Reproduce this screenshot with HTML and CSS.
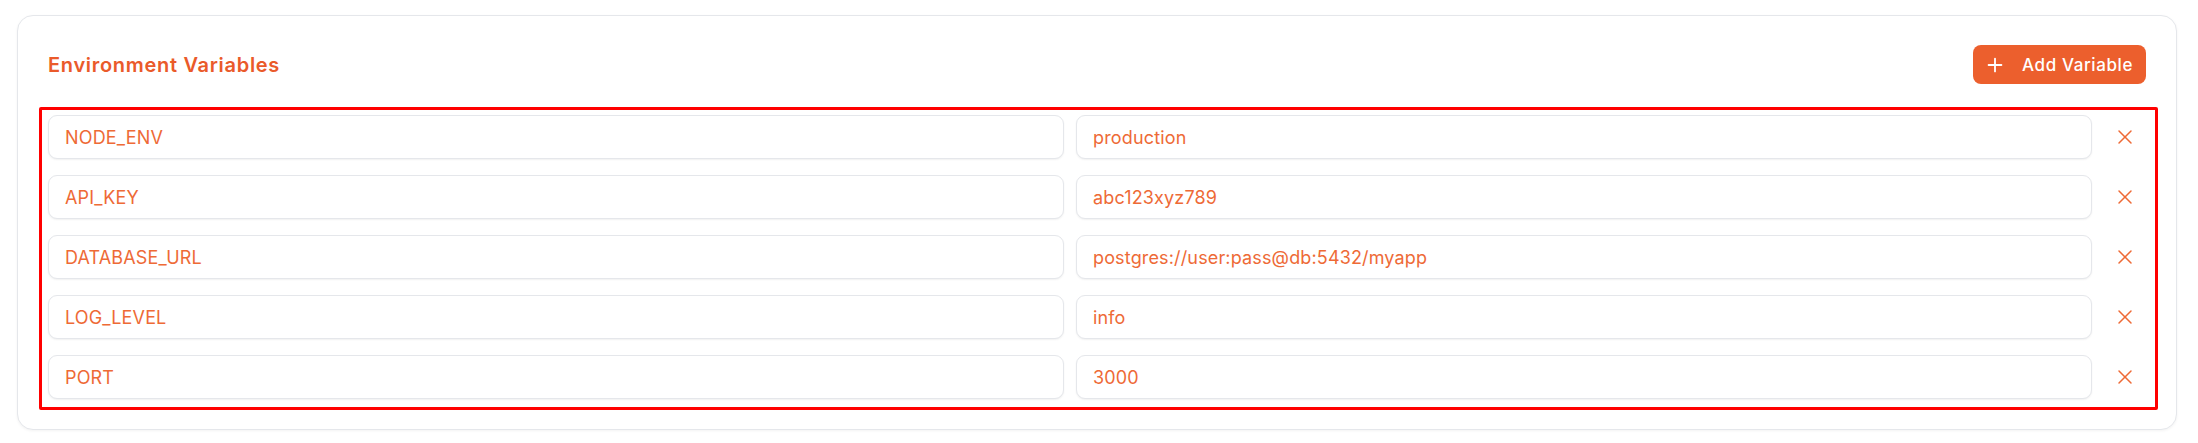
FILE: index.html
```html
<!DOCTYPE html>
<html lang="en">
<head>
  <meta charset="UTF-8">
  <title>Environment Variables</title>
  <link rel="stylesheet" href="styles.css">
</head>
<body>

  <div class="page">
    <section class="card">
      <div class="card-header">
        <h2 class="card-title">Environment Variables</h2>
        <button class="btn-add" type="button">
          <svg class="icon-plus" viewBox="0 0 24 24" fill="none" stroke="currentColor" stroke-width="2" stroke-linecap="round" stroke-linejoin="round"><path d="M5 12h14"/><path d="M12 5v14"/></svg>
          <span>Add Variable</span>
        </button>
      </div>

      <div class="var-list">
        <div class="var-row">
          <input class="var-input" type="text" value="NODE_ENV">
          <input class="var-input" type="text" value="production">
          <button class="btn-remove" type="button"><svg class="icon-x" viewBox="0 0 24 24" fill="none" stroke="currentColor" stroke-width="1.5" stroke-linecap="round" stroke-linejoin="round"><path d="M18 6 6 18"/><path d="m6 6 12 12"/></svg></button>
        </div>
        <div class="var-row">
          <input class="var-input" type="text" value="API_KEY">
          <input class="var-input" type="text" value="abc123xyz789">
          <button class="btn-remove" type="button"><svg class="icon-x" viewBox="0 0 24 24" fill="none" stroke="currentColor" stroke-width="1.5" stroke-linecap="round" stroke-linejoin="round"><path d="M18 6 6 18"/><path d="m6 6 12 12"/></svg></button>
        </div>
        <div class="var-row">
          <input class="var-input" type="text" value="DATABASE_URL">
          <input class="var-input" type="text" value="postgres://user:pass@db:5432/myapp">
          <button class="btn-remove" type="button"><svg class="icon-x" viewBox="0 0 24 24" fill="none" stroke="currentColor" stroke-width="1.5" stroke-linecap="round" stroke-linejoin="round"><path d="M18 6 6 18"/><path d="m6 6 12 12"/></svg></button>
        </div>
        <div class="var-row">
          <input class="var-input" type="text" value="LOG_LEVEL">
          <input class="var-input" type="text" value="info">
          <button class="btn-remove" type="button"><svg class="icon-x" viewBox="0 0 24 24" fill="none" stroke="currentColor" stroke-width="1.5" stroke-linecap="round" stroke-linejoin="round"><path d="M18 6 6 18"/><path d="m6 6 12 12"/></svg></button>
        </div>
        <div class="var-row">
          <input class="var-input" type="text" value="PORT">
          <input class="var-input" type="text" value="3000">
          <button class="btn-remove" type="button"><svg class="icon-x" viewBox="0 0 24 24" fill="none" stroke="currentColor" stroke-width="1.5" stroke-linecap="round" stroke-linejoin="round"><path d="M18 6 6 18"/><path d="m6 6 12 12"/></svg></button>
        </div>
      </div>
    </section>
  </div>

</body>
</html>
```

FILE: styles.css
```css
body {
  font-family: Inter, "Noto Sans", sans-serif;
  background-color: #ffffff;
  margin: 0;
}

.page {
  padding: 15px 21px 13px 17px;
}

.card {
  background-color: white;
  border: 1px solid #e5e7eb;
  border-radius: 16px;
  padding: 29px 30px 19px;
  box-shadow: 0 1px 3px rgba(0, 0, 0, 0.05);
}

.card-header {
  display: flex;
  justify-content: space-between;
  align-items: center;
  margin-bottom: 23px;
}

.card-title {
  margin: 0;
  font-size: 20px;
  font-weight: 600;
  letter-spacing: 0.7px;
  color: #ea5a2a;
}

.btn-add {
  display: flex;
  align-items: center;
  gap: 16px;
  height: 39px;
  padding: 0 13px 0 11px;
  background-color: #ec5f2d;
  color: white;
  font-family: inherit;
  font-size: 17px;
  font-weight: 500;
  letter-spacing: 0.6px;
  border: none;
  border-radius: 8px;
  cursor: pointer;
}

.icon-plus {
  width: 22px;
  height: 22px;
}

.var-list {
  display: flex;
  flex-direction: column;
  gap: 16px;
  margin: 0 -12px 0 -9px;
  padding: 5px 9px 8px 6px;
  border: 3px solid #ff0000;
  border-radius: 2px;
}

.var-row {
  display: grid;
  grid-template-columns: 1fr 1fr 42px;
  gap: 12px;
  align-items: center;
}

.var-input {
  box-sizing: border-box;
  width: 100%;
  height: 44px;
  padding: 0 16px;
  font-family: inherit;
  font-size: 18px;
  letter-spacing: 0.15px;
  color: #ee6a36;
  background-color: white;
  border: 1px solid #e5e7eb;
  border-radius: 9px;
  box-shadow: 0 1px 2px rgba(0, 0, 0, 0.06);
  outline: none;
}

.btn-remove {
  display: flex;
  align-items: center;
  justify-content: center;
  height: 44px;
  padding: 0;
  background: none;
  border: none;
  color: #ee6a36;
  cursor: pointer;
}

.icon-x {
  width: 24px;
  height: 24px;
}
```
